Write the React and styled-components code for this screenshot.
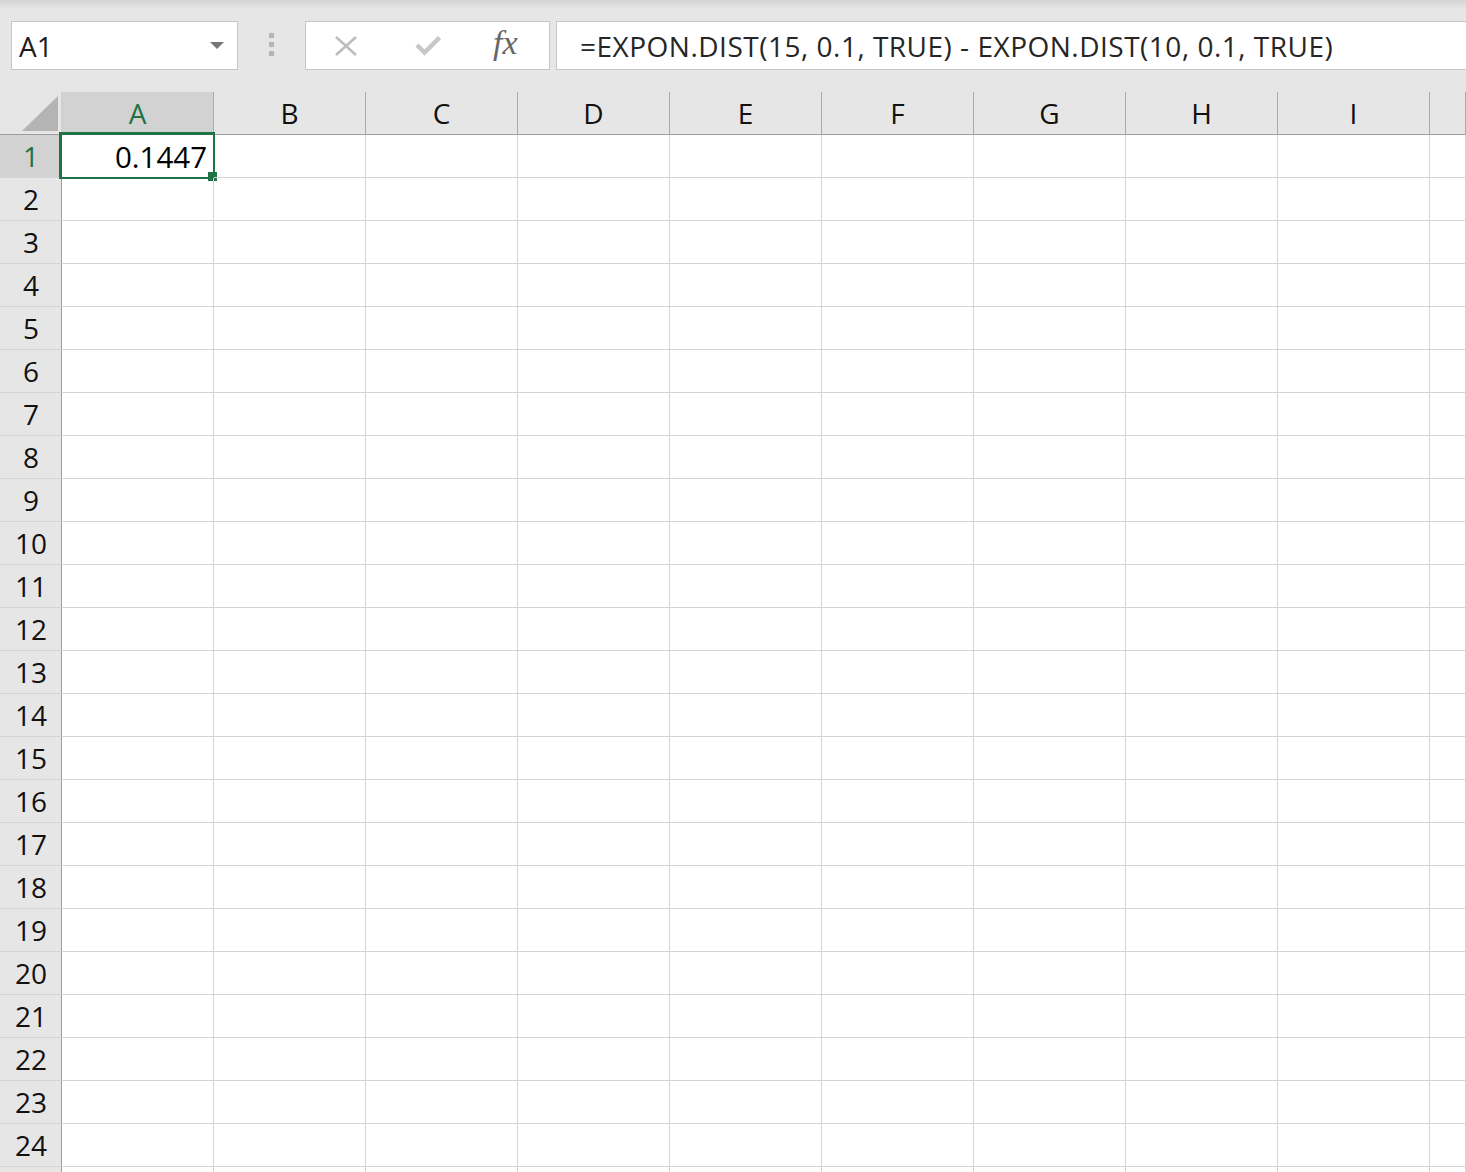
import React from "react";
import styled, { createGlobalStyle } from "styled-components";

const Global = createGlobalStyle`
  html, body { margin: 0; padding: 0; background: #ffffff; overflow: hidden; }
  body { width: 1466px; height: 1172px; font-family: "Open Sans", "Noto Sans", sans-serif; }
`;

const Page = styled.div`
  width: 1466px;
  height: 1172px;
  overflow: hidden;
  display: flex;
  flex-direction: column;
`;

const TopBar = styled.div`
  height: 92px;
  flex: none;
  box-sizing: border-box;
  padding-top: 21px;
  display: flex;
  align-items: flex-start;
  background: linear-gradient(#d4d4d4 0px, #e6e6e6 9px, #e6e6e6 100%);
`;

const Box = styled.div`
  box-sizing: border-box;
  height: 49px;
  background: #ffffff;
  border: 1px solid #c6c6c6;
  display: flex;
  align-items: center;
  flex: none;
`;

const NameBox = styled(Box)`
  margin-left: 11px;
  width: 227px;
  padding-left: 7px;
  justify-content: space-between;
  font-size: 28px;
  color: #1e1e1e;
`;

const Caret = styled.span`
  width: 0;
  height: 0;
  margin-right: 13px;
  border-left: 7px solid transparent;
  border-right: 7px solid transparent;
  border-top: 7px solid #777777;
`;

const Grip = styled.div`
  width: 67px;
  flex: none;
  height: 49px;
  display: flex;
  flex-direction: column;
  align-items: center;
  justify-content: center;
  gap: 4px;
  padding-bottom: 2px;
  box-sizing: border-box;
`;

const GripDot = styled.span`
  width: 5px;
  height: 5px;
  background: #b5b5b5;
`;

const ToolBox = styled(Box)`
  width: 245px;
  padding-left: 29px;
`;

const IconSlot = styled.span`
  display: flex;
  align-items: center;
  margin-left: ${(p) => p.$gap || 0}px;
`;

const Fx = styled.span`
  font-family: "Liberation Serif", "DejaVu Serif", serif;
  font-style: italic;
  font-size: 34px;
  color: #666666;
  line-height: 1;
  margin-left: 52px;
  margin-top: -5px;
`;

const FormulaBox = styled(Box)`
  margin-left: 6px;
  flex: 1;
  border-right: none;
  padding-left: 23px;
  font-size: 28px;
  letter-spacing: 0.5px;
  color: #262626;
  white-space: nowrap;
`;

const Sheet = styled.div`
  flex: 1;
  display: grid;
  grid-template-columns: 62px repeat(9, 152px) 1fr;
  grid-auto-rows: 43px;
  background: #ffffff;
`;

const Corner = styled.div`
  position: relative;
  background: #e6e6e6;
  border-right: 1px solid #cfcfcf;
  border-bottom: 1px solid #9e9e9e;
  box-sizing: border-box;
`;

const CornerTriangle = styled.span`
  position: absolute;
  right: 3px;
  bottom: 3px;
  width: 0;
  height: 0;
  border-left: 36px solid transparent;
  border-bottom: 35px solid #b4b4b4;
`;

const ColHeader = styled.div`
  box-sizing: border-box;
  background: ${(p) => (p.$active ? "#d2d2d2" : "#e6e6e6")};
  color: ${(p) => (p.$active ? "#217346" : "#111111")};
  border-right: 1px solid #ababab;
  border-bottom: ${(p) => (p.$active ? "2px solid #217346" : "1px solid #9e9e9e")};
  display: flex;
  align-items: center;
  justify-content: center;
  font-size: 28px;
`;

const RowHeader = styled.div`
  box-sizing: border-box;
  background: ${(p) => (p.$active ? "#d2d2d2" : "#e6e6e6")};
  color: ${(p) => (p.$active ? "#217346" : "#111111")};
  border-right: 1px solid #9e9e9e;
  border-bottom: 1px solid #d4d4d4;
  display: flex;
  align-items: center;
  justify-content: center;
  padding-left: 1px;
  font-size: 28px;
`;

const Cell = styled.div`
  position: relative;
  box-sizing: border-box;
  border-right: 1px solid #d4d4d4;
  border-bottom: 1px solid #d4d4d4;
  display: flex;
  align-items: flex-end;
  justify-content: flex-end;
  padding: 0 6px 3px 0;
  font-size: 29.5px;
  color: #000000;
  line-height: 1.2;
`;

const Selection = styled.span`
  position: absolute;
  left: -3px;
  top: -3px;
  right: -2px;
  bottom: -2px;
  border: 2px solid #217346;
  border-left-width: 3px;
  border-top-width: 3px;
  pointer-events: none;
`;

const FillHandle = styled.span`
  position: absolute;
  left: 146px;
  top: 37px;
  width: 9px;
  height: 9px;
  background: #217346;
`;

const cols = ["A", "B", "C", "D", "E", "F", "G", "H", "I", ""];

const XIcon = () => (
  <svg width="22" height="20" viewBox="0 0 22 20">
    <path d="M1 1 L21 19 M21 1 L1 19" stroke="#bdbdbd" strokeWidth="2.6" fill="none" />
  </svg>
);

const CheckIcon = () => (
  <svg width="26" height="21" viewBox="0 0 26 21">
    <path d="M2 10 L9.5 17.5 L24.5 2.5" stroke="#c8c8c8" strokeWidth="4.5" fill="none" strokeLinejoin="miter" />
  </svg>
);

export default function App() {
  const rows = Array.from({ length: 25 }, (_, i) => i + 1);
  return (
    <Page>
      <Global />
      <TopBar>
        <NameBox>
          <span>A1</span>
          <Caret />
        </NameBox>
        <Grip>
          <GripDot />
          <GripDot />
          <GripDot />
        </Grip>
        <ToolBox>
          <IconSlot>
            <XIcon />
          </IconSlot>
          <IconSlot $gap={58}>
            <CheckIcon />
          </IconSlot>
          <Fx>fx</Fx>
        </ToolBox>
        <FormulaBox>=EXPON.DIST(15, 0.1, TRUE) - EXPON.DIST(10, 0.1, TRUE)</FormulaBox>
      </TopBar>
      <Sheet>
        <Corner>
          <CornerTriangle />
        </Corner>
        {cols.map((c, i) => (
          <ColHeader key={"h" + i} $active={c === "A"}>
            {c}
          </ColHeader>
        ))}
        {rows.map((r) => (
          <React.Fragment key={r}>
            <RowHeader $active={r === 1}>{r <= 24 ? r : ""}</RowHeader>
            {cols.map((c, i) => (
              <Cell key={r + "-" + i}>
                {r === 1 && c === "A" ? (
                  <>
                    0.1447
                    <Selection />
                    <FillHandle />
                  </>
                ) : null}
              </Cell>
            ))}
          </React.Fragment>
        ))}
      </Sheet>
    </Page>
  );
}
